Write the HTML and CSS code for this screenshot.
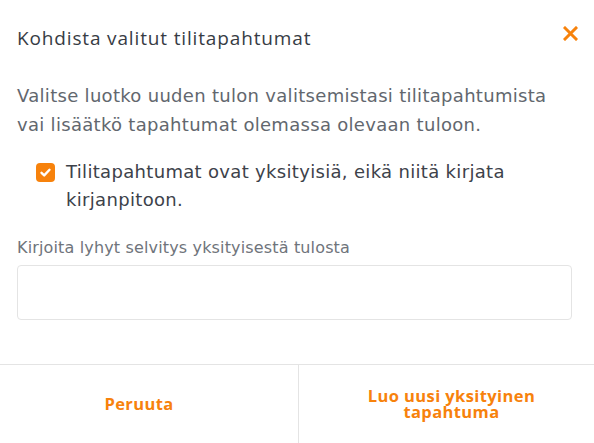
FILE: index.html
```html
<!DOCTYPE html>
<html lang="fi">
<head>
<meta charset="utf-8">
<title>Kohdista valitut tilitapahtumat</title>
<link rel="stylesheet" href="styles.css">
</head>
<body>
<div class="modal">
  <header class="modal-header">
    <h1 class="modal-title">Kohdista valitut tilitapahtumat</h1>
    <button class="close-btn" aria-label="Sulje">
      <svg width="15" height="15" viewBox="0 0 15 15"><path d="M2 2 L13 13 M13 2 L2 13" stroke="#f7820c" stroke-width="3" stroke-linecap="square" fill="none"/></svg>
    </button>
  </header>
  <div class="modal-body">
    <p class="intro">Valitse luotko uuden tulon valitsemistasi tilitapahtumista vai lisäätkö tapahtumat olemassa olevaan tuloon.</p>
    <label class="check-row">
      <span class="checkbox">
        <svg width="19" height="19" viewBox="0 0 19 19"><path d="M5.5 9.8 L8.2 12.4 L13.5 6.8" stroke="#fff" stroke-width="2.4" stroke-linecap="round" stroke-linejoin="round" fill="none"/></svg>
      </span>
      <span class="check-label">Tilitapahtumat ovat yksityisiä, eikä niitä kirjata kirjanpitoon.</span>
    </label>
    <div class="field">
      <div class="field-label">Kirjoita lyhyt selvitys yksityisestä tulosta</div>
      <div class="field-input"></div>
    </div>
  </div>
  <footer class="modal-footer">
    <button class="footer-btn cancel">Peruuta</button>
    <button class="footer-btn confirm">Luo uusi yksityinen tapahtuma</button>
  </footer>
</div>
</body>
</html>
```
FILE: styles.css
```css
* { box-sizing: border-box; }
html, body { margin: 0; padding: 0; background: #fff; }
body { font-family: "DejaVu Sans", "Open Sans", sans-serif; }
.modal {
  width: 594px;
  height: 443px;
  display: flex;
  flex-direction: column;
}
.modal-header {
  display: flex;
  justify-content: space-between;
  align-items: flex-start;
  padding: 26px 16px 0 17px;
}
.modal-title {
  margin: 0;
  font-family: "Open Sans", sans-serif;
  font-size: 19px;
  line-height: 24px;
  font-weight: 500;
  letter-spacing: 0.85px;
  color: #373c44;
}
.close-btn {
  border: 0;
  background: none;
  padding: 0;
  margin-top: 0;
  width: 15px;
  height: 15px;
  display: flex;
}
.modal-body {
  padding: 0 22px 0 17px;
  flex: 1;
}
.intro {
  margin: 31px 0 0;
  font-size: 18px;
  line-height: 29px;
  letter-spacing: 0.3px;
  color: #62676e;
}
.check-row {
  display: flex;
  align-items: flex-start;
  gap: 11px;
  padding-left: 19px;
  margin-top: 19px;
}
.checkbox {
  flex: none;
  width: 19px;
  height: 19px;
  border-radius: 4px;
  background: #f7820c;
  margin-top: 5px;
  display: flex;
}
.check-label {
  font-size: 18px;
  line-height: 28px;
  letter-spacing: 0.32px;
  color: #3d424a;
}
.field { margin-top: 24px; }
.field-label {
  font-size: 16px;
  line-height: 20px;
  letter-spacing: 0.15px;
  color: #6f747b;
}
.field-input {
  margin-top: 7px;
  height: 55px;
  border: 1px solid #e4e4e4;
  border-radius: 4px;
}
.modal-footer {
  display: grid;
  grid-template-columns: 299px 1fr;
  height: 79px;
  border-top: 1px solid #e4e4e4;
}
.footer-btn {
  border: 0;
  background: none;
  font-family: "Open Sans", sans-serif;
  font-size: 16.5px;
  line-height: 16px;
  font-weight: 700;
  letter-spacing: 0.4px;
  color: #f7820c;
  text-align: center;
}
.cancel {
  border-right: 1px solid #e4e4e4;
  padding: 0 20px 0 0;
}
.confirm { padding: 0 24px 0 34px; }
```
